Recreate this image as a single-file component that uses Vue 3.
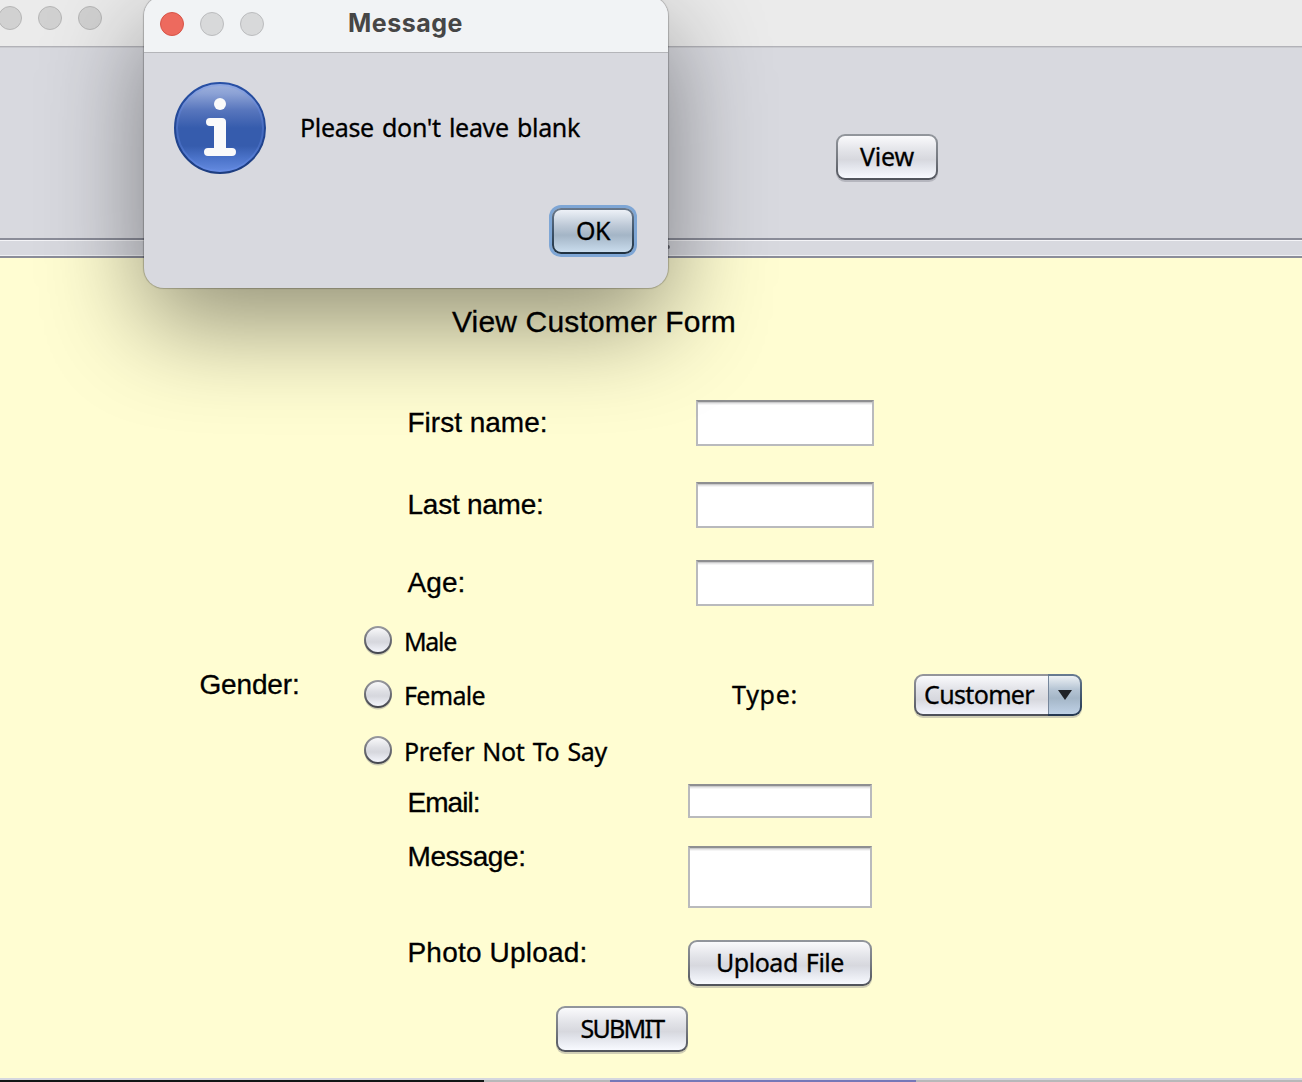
<script setup>
import { ref } from 'vue'

const gender = ref('')
const options = ['Male', 'Female', 'Prefer Not To Say']
const optionWidths = [52, 81, 203]

// Spreads the letters of a text so that it takes the given width.
const vFit = {
  mounted(el, binding) {
    const natural = el.getBoundingClientRect().width
    el.style.letterSpacing = (binding.value - natural) / el.textContent.length + 'px'
  }
}
</script>

<template>
  <div class="screen">
    <header class="titlebar">
      <i class="light"></i><i class="light"></i><i class="light"></i>
    </header>
    <section class="toolbar">
      <button class="btn view"><span v-fit="54" class="t">View</span></button>
    </section>
    <div class="divider"><i class="grip"></i></div>

    <main class="form">
      <h1><span v-fit="284" class="t">View Customer Form</span></h1>
      <div class="row first">
        <label><span v-fit="140" class="t">First name:</span></label>
        <div class="field"></div>
      </div>
      <div class="row last">
        <label><span v-fit="136" class="t">Last name:</span></label>
        <div class="field"></div>
      </div>
      <div class="row age">
        <label><span v-fit="58" class="t">Age:</span></label>
        <div class="field"></div>
      </div>

      <div class="choices">
        <div class="gender"><span v-fit="100" class="t">Gender:</span></div>
        <div class="radios">
          <div v-for="(o, i) in options" :key="o" class="radio" @click="gender = o">
            <svg width="30" height="32" viewBox="0 0 30 32">
              <defs>
                <linearGradient id="face" x1="0" y1="0" x2="0" y2="1">
                  <stop offset="0" stop-color="#fbfbfc" />
                  <stop offset=".42" stop-color="#dddee3" />
                  <stop offset=".58" stop-color="#d6d7dd" />
                  <stop offset="1" stop-color="#f6f8ff" />
                </linearGradient>
                <linearGradient id="rim" x1="0" y1="0" x2="0" y2="1">
                  <stop offset="0" stop-color="#97989d" />
                  <stop offset="1" stop-color="#44464e" />
                </linearGradient>
              </defs>
              <circle cx="15" cy="17" r="13.6" fill="#cdccb3" />
              <circle cx="15" cy="15" r="13" fill="url(#face)" stroke="url(#rim)" stroke-width="2" />
            </svg>
            <span v-fit="optionWidths[i]" class="t wide">{{ o }}</span>
          </div>
        </div>
        <div class="type"><span v-fit="66" class="t">Type:</span></div>
        <div class="combo">
          <div class="combo-value"><span v-fit="110" class="t">Customer</span></div>
          <div class="combo-arrow">
            <svg width="14" height="10" viewBox="0 0 14 10"><path d="M0 0H14L7 10Z" fill="#202226" /></svg>
          </div>
        </div>
      </div>

      <div class="row email">
        <label><span v-fit="72" class="t">Email:</span></label>
        <div class="field"></div>
      </div>
      <div class="row message">
        <label><span v-fit="118" class="t">Message:</span></label>
        <div class="field"></div>
      </div>
      <div class="row photo">
        <label><span v-fit="180" class="t">Photo Upload:</span></label>
        <button class="btn upload"><span v-fit="128" class="t wide">Upload File</span></button>
      </div>
      <button class="btn submit"><span v-fit="83" class="t">SUBMIT</span></button>
    </main>
    <footer class="behind">
      <div class="dark"></div><div class="pale"></div><div class="link"></div>
    </footer>

    <div class="dialog">
      <div class="dialog-title">
        <i class="light red"></i><i class="light"></i><i class="light"></i>
        <b><span v-fit="115" class="t">Message</span></b>
      </div>
      <div class="dialog-body">
        <svg class="info" width="92" height="92" viewBox="0 0 92 92">
          <defs>
            <linearGradient id="ball" x1="0" y1="0" x2="0" y2="1">
              <stop offset="0" stop-color="#a0b3de" />
              <stop offset=".12" stop-color="#8ba1d5" />
              <stop offset=".3" stop-color="#5876bd" />
              <stop offset=".5" stop-color="#365cad" />
              <stop offset=".7" stop-color="#365cad" />
              <stop offset=".83" stop-color="#4a72c8" />
              <stop offset="1" stop-color="#678de2" />
            </linearGradient>
            <linearGradient id="edge" x1="0" y1="0" x2="0" y2="1">
              <stop offset="0" stop-color="#2850a5" />
              <stop offset="1" stop-color="#1d3d80" />
            </linearGradient>
          </defs>
          <circle cx="46" cy="46" r="45" fill="url(#ball)" stroke="url(#edge)" stroke-width="2" />
          <circle cx="46" cy="46" r="43" fill="none" stroke="#6c92ee" stroke-opacity=".3" stroke-width="2" />
          <circle cx="46" cy="22" r="6" fill="#fafafa" />
          <path d="M36 36H48Q52 36 52 40V66H58A4 4 0 0 1 58 74H34A4 4 0 0 1 34 66H40V44H36A4 4 0 0 1 36 36Z" fill="#fafafa" />
        </svg>
        <p><span v-fit="280" class="t wide">Please don't leave blank</span></p>
      </div>
      <button class="btn ok"><span v-fit="34" class="t">OK</span></button>
    </div>
  </div>
</template>

<style>
body { margin: 0; overflow: hidden; }
</style>

<style scoped>
* { box-sizing: border-box; }
.screen {
  position: relative; width: 1302px; height: 1082px; overflow: hidden;
  display: flex; flex-direction: column; background: #d8d9df; color: #000;
  font: 25px/32px "Noto Sans", "Open Sans", sans-serif;
  -webkit-text-stroke: .3px currentColor;
}
.t { display: inline-block; white-space: nowrap; }
.wide { word-spacing: 2px; }
.titlebar {
  height: 48px; flex: none; display: flex; gap: 16px; padding-top: 6px;
  background: #ebebeb; border-bottom: 1px solid #c9cacf; box-shadow: inset 0 -1px #b2b2b8;
}
.titlebar .light:first-child { margin-left: -2px; }
.light {
  flex: none; width: 24px; height: 24px; border-radius: 50%;
  background: #d1d1d1; border: 1px solid #b6b6b6;
}
.toolbar { height: 190px; flex: none; padding: 86px 0 0 836px; }
.btn {
  display: flex; align-items: center; justify-content: center;
  height: 46px; padding: 0 0 2px; border: 2px solid transparent; border-radius: 9px;
  font: inherit; color: #000; box-shadow: 0 2px 0 rgba(110, 110, 120, .32);
  background:
    linear-gradient(#fafafc, #e2e3e8 35%, #d7d8de 56%, #dfe1e8 68%, #f8faff) padding-box,
    linear-gradient(#93979d, #777b82 50%, #50535b) border-box;
}
.view { width: 102px; }
.divider {
  height: 20px; flex: none; border: solid #8b8d99; border-width: 2px 0;
  box-shadow: inset 0 1px #f4f4f7, inset 0 -1px #eff0f3;
}
.grip { display: block; width: 4px; height: 4px; margin: 5px 0 0 666px; border-radius: 50%; background: #73757f; }
.form {
  height: 820px; flex: none; background: #fffdd2;
  display: flex; flex-direction: column; align-items: flex-start;
}
h1 { margin: 47px 0 0 452px; font: 30px/34px "Liberation Sans", Arial, sans-serif; }
.row { display: flex; align-items: flex-start; padding-left: 407px; }
.row label, .gender { font: 28px/32px "Liberation Sans", Arial, sans-serif; }
.row label { width: 289px; padding-top: 7px; }
.row label .t, .gender .t { margin-left: .5px; }
.field {
  width: 178px; height: 46px; background: #fff; border: 2px solid #b9babd; border-top-color: #8e8f91;
  box-shadow: inset 0 1px #cbcbcc, inset 0 2px #e6e6e7, inset 0 3px #f5f5f5;
}
.first { margin-top: 61px; }
.last { margin-top: 36px; }
.age { margin-top: 32px; }
.choices { height: 178px; width: 100%; display: flex; align-items: flex-start; }
.gender { width: 164px; margin: 63px 0 0 199px; }
.radios { display: flex; flex-direction: column; gap: 22px; width: 368px; padding-top: 19px; }
.radio { display: flex; align-items: center; gap: 11px; height: 32px; }
.radio .t { margin-top: -1px; }
.radio svg { flex: none; }
.radio:last-child { margin-top: 2px; }
.type { width: 183px; padding: 72px 0 0 1px; }
.combo {
  display: flex; width: 168px; height: 42px; margin-top: 68px; border-radius: 9px;
  box-shadow: 0 2px 0 rgba(110, 110, 120, .32);
}
.combo-value {
  flex: 1; display: flex; align-items: center; padding: 0 0 2px 8px; border: 2px solid transparent;
  border-right: 0; border-radius: 9px 0 0 9px;
  background:
    linear-gradient(#fafafc, #e2e3e8 35%, #d7d8de 62%, #f3f5fd) padding-box,
    linear-gradient(#95969c, #777981 50%, #4c4f58) border-box;
}
.combo-arrow {
  width: 34px; display: flex; align-items: center; justify-content: center; padding-left: 2px;
  border: 2px solid transparent; border-left: 0; border-radius: 0 9px 9px 0;
  background:
    linear-gradient(#75869b, #75869b) 0 0 / 1px 100% no-repeat padding-box,
    linear-gradient(#edf1f5, #b6c5d4 35%, #a4b6c7 58%, #bfd1e6) padding-box,
    linear-gradient(#687b91, #44586f 50%, #233650) border-box;
}
.email label, .message label, .photo label { width: 281px; padding-top: 3px; }
.email { height: 34px; }
.email .field { width: 184px; height: 34px; }
.message { margin-top: 28px; }
.message label { padding-top: 0; margin-top: -5px; }
.message .field { width: 184px; height: 62px; }
.photo { margin-top: 32px; }
.photo label { padding-top: 0; margin-top: -3px; }
.upload { width: 184px; }
.submit { width: 132px; margin: 20px 0 0 556px; }
.behind { height: 4px; flex: none; display: flex; padding-top: 2px; background: #d5d7df; }
.behind div { height: 2px; }
.dark { width: 484px; background: #111615; }
.pale { width: 126px; background: #b7b8b9; }
.link { width: 306px; background: #7578b8; }
.behind::after { content: ""; flex: 1; background: #b7b8b9; }

.dialog {
  position: absolute; left: 144px; top: -4px; width: 524px; height: 292px;
  border-radius: 20px; background: #d8d9df;
  box-shadow: 0 0 1px 1px rgba(0, 0, 0, .22), 0 36px 100px rgba(0, 0, 0, .43);
}
.dialog-title {
  height: 57px; display: flex; align-items: center; gap: 16px; padding-left: 16px;
  background: #f1f3f5; border-bottom: 1px solid #b4b5b9; border-radius: 20px 20px 0 0;
}
.dialog-title .light { background: #d8d9da; border-color: #bbbcbe; }
.dialog-title .red { background: #ed6a5e; border-color: #d75347; }
.dialog-title b {
  margin: -2px 0 0 68px; font: 700 25px/32px Inter, "Liberation Sans", sans-serif; color: #464646;
  -webkit-text-stroke: 0;
}
.dialog-body { display: flex; height: 155px; padding: 29px 0 0 30px; }
.info { flex: none; }
.dialog-body p { margin: 29px 0 0 34px; }
.ok {
  width: 82px; margin-left: 408px;
  box-shadow: 0 0 0 3px #7ea6d5;
  background:
    linear-gradient(#edf1f7, #bcc8d6 38%, #a4b5c6 60%, #c9dced) padding-box,
    linear-gradient(#69788a, #40546a 50%, #1f303f) border-box;
}
</style>
